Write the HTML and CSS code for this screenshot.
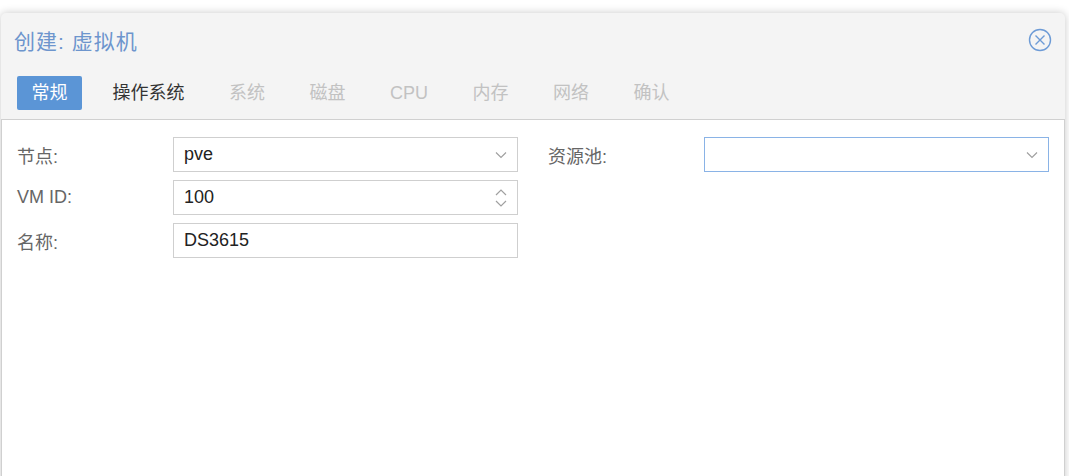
FILE: index.html
```html
<!DOCTYPE html>
<html lang="zh">
<head>
<meta charset="utf-8">
<link rel="stylesheet" href="styles.css">
</head>
<body>
<div class="window">
  <div class="header">
    <div class="title">创建: 虚拟机</div>
    <svg class="close" width="24" height="24" viewBox="0 0 24 24">
      <circle cx="12" cy="12" r="10.5" fill="none" stroke="#6d9bd6" stroke-width="1.4"/>
      <path d="M7.5 7.5 L16.5 16.5 M16.5 7.5 L7.5 16.5" stroke="#6d9bd6" stroke-width="1.4" fill="none"/>
    </svg>
  </div>
  <div class="tabs">
    <div class="tab active">常规</div>
    <div class="tab">操作系统</div>
    <div class="tab disabled">系统</div>
    <div class="tab disabled">磁盘</div>
    <div class="tab disabled">CPU</div>
    <div class="tab disabled">内存</div>
    <div class="tab disabled">网络</div>
    <div class="tab disabled">确认</div>
  </div>
  <div class="panel">
    <div class="col">
      <div class="row">
        <div class="label">节点:</div>
        <div class="field">
          <span class="value">pve</span>
          <svg class="chev" width="12" height="8" viewBox="0 0 12 8"><path d="M1 1.5 L6 6.5 L11 1.5" fill="none" stroke="#a0a0a0" stroke-width="1.2"/></svg>
        </div>
      </div>
      <div class="row">
        <div class="label">VM ID:</div>
        <div class="field">
          <span class="value">100</span>
          <svg class="spin" width="12" height="20" viewBox="0 0 12 20"><path d="M1 7 L6 2 L11 7 M1 13 L6 18 L11 13" fill="none" stroke="#a0a0a0" stroke-width="1.2"/></svg>
        </div>
      </div>
      <div class="row">
        <div class="label">名称:</div>
        <div class="field">
          <span class="value">DS3615</span>
        </div>
      </div>
    </div>
    <div class="col">
      <div class="row">
        <div class="label">资源池:</div>
        <div class="field focus">
          <span class="value"></span>
          <svg class="chev" width="12" height="8" viewBox="0 0 12 8"><path d="M1 1.5 L6 6.5 L11 1.5" fill="none" stroke="#a0a0a0" stroke-width="1.2"/></svg>
        </div>
      </div>
    </div>
  </div>
</div>
</body>
</html>
```

FILE: styles.css
```css
html, body {
  margin: 0;
  padding: 0;
  background: #ffffff;
  overflow: hidden;
}
body {
  font-family: "Liberation Sans", "Noto Sans CJK SC", sans-serif;
  height: 476px;
}
.window {
  margin: 13px 4px 0 1px;
  height: 470px;
  background: #f4f4f4;
  border-radius: 5px 5px 0 0;
  box-shadow: 0 0 9px rgba(0, 0, 0, 0.22);
  display: flex;
  flex-direction: column;
}
.header {
  height: 54px;
  display: flex;
  align-items: center;
  justify-content: space-between;
  padding: 0 13px 0 13px;
}
.title {
  font-size: 21px;
  color: #6d95cd;
  letter-spacing: 1px;
}
.close {
  display: block;
  margin-top: 0;
}
.tabs {
  display: flex;
  gap: 16.5px;
  padding: 9px 0 0 16px;
  height: 34px;
}
.tab {
  height: 34px;
  line-height: 34px;
  padding: 0 14px;
  font-size: 18px;
  color: #333333;
  border-radius: 2px;
}
.tab.active {
  background: #5b95d6;
  color: #ffffff;
  padding: 0 14.5px;
}
.tab.disabled {
  color: #c2c2c2;
}
.panel {
  margin-top: 9px;
  flex: 1;
  background: #ffffff;
  border: 1px solid #d0d0d0;
  border-bottom: none;
  display: flex;
  gap: 30px;
  padding: 17px 15px 0 15px;
}
.col {
  flex: 1;
  display: flex;
  flex-direction: column;
  gap: 8px;
}
.row {
  display: flex;
  align-items: center;
  height: 35px;
}
.label {
  width: 156px;
  font-size: 18px;
  color: #666666;
}
.field {
  flex: 1;
  height: 35px;
  box-sizing: border-box;
  border: 1px solid #cfcfcf;
  display: flex;
  align-items: center;
  justify-content: space-between;
  padding: 0 10px 0 10px;
}
.field.focus {
  border-color: #8ab3e6;
}
.value {
  font-size: 18px;
  color: #222222;
}
.chev, .spin {
  display: block;
}
```
